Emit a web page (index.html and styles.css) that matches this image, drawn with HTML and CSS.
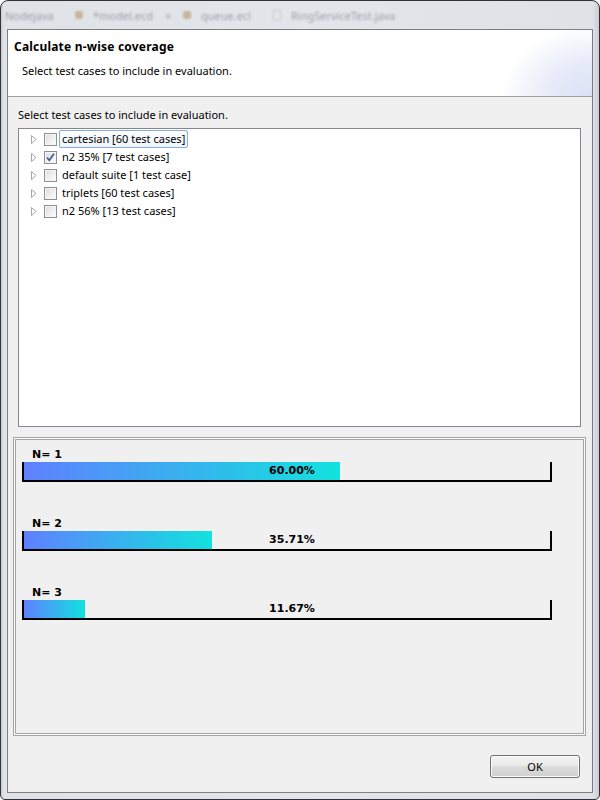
FILE: index.html
```html
<!DOCTYPE html>
<html>
<head>
<meta charset="utf-8">
<link rel="stylesheet" href="styles.css">
</head>
<body>
<div class="window">
  <div class="chrome">
    <span class="tab t1">Nodejava</span>
    <span class="tab t2"><i class="ico ico-o"></i>*model.ecd<span class="x">×</span></span>
    <span class="tab t3"><i class="ico ico-o"></i>queue.ecl</span>
    <span class="tab t4"><i class="ico ico-f"></i>RingServiceTest.java</span>
  </div>
  <div class="client">
    <div class="header">
      <div class="title">Calculate n-wise coverage</div>
      <div class="subtitle">Select test cases to include in evaluation.</div>
    </div>
    <div class="body">
      <div class="label">Select test cases to include in evaluation.</div>
      <div class="tree">
        <div class="row">
          <svg class="arrow" width="6" height="9" viewBox="0 0 6 9"><path d="M0.5 0.5 L5 4.5 L0.5 8.5 Z" fill="none" stroke="#a6a6a6"/></svg>
          <span class="cb"></span>
          <span class="txt focus">cartesian [60 test cases]</span>
        </div>
        <div class="row">
          <svg class="arrow" width="6" height="9" viewBox="0 0 6 9"><path d="M0.5 0.5 L5 4.5 L0.5 8.5 Z" fill="none" stroke="#a6a6a6"/></svg>
          <span class="cb"><svg width="11" height="11" viewBox="0 0 11 11"><path d="M2 5.5 L4.3 8.3 L9 1.8" fill="none" stroke="#4a5e91" stroke-width="1.8"/></svg></span>
          <span class="txt">n2 35% [7 test cases]</span>
        </div>
        <div class="row">
          <svg class="arrow" width="6" height="9" viewBox="0 0 6 9"><path d="M0.5 0.5 L5 4.5 L0.5 8.5 Z" fill="none" stroke="#a6a6a6"/></svg>
          <span class="cb"></span>
          <span class="txt">default suite [1 test case]</span>
        </div>
        <div class="row">
          <svg class="arrow" width="6" height="9" viewBox="0 0 6 9"><path d="M0.5 0.5 L5 4.5 L0.5 8.5 Z" fill="none" stroke="#a6a6a6"/></svg>
          <span class="cb"></span>
          <span class="txt">triplets [60 test cases]</span>
        </div>
        <div class="row">
          <svg class="arrow" width="6" height="9" viewBox="0 0 6 9"><path d="M0.5 0.5 L5 4.5 L0.5 8.5 Z" fill="none" stroke="#a6a6a6"/></svg>
          <span class="cb"></span>
          <span class="txt">n2 56% [13 test cases]</span>
        </div>
      </div>
      <div class="group">
        <div class="group-inner">
          <div class="cov">
            <div class="nlabel">N= 1</div>
            <div class="bar"><div class="fill" style="width:60%"></div><span class="pct">60.00%</span></div>
          </div>
          <div class="cov">
            <div class="nlabel">N= 2</div>
            <div class="bar"><div class="fill" style="width:35.71%"></div><span class="pct">35.71%</span></div>
          </div>
          <div class="cov">
            <div class="nlabel">N= 3</div>
            <div class="bar"><div class="fill" style="width:11.67%"></div><span class="pct">11.67%</span></div>
          </div>
        </div>
      </div>
      <div class="buttons">
        <button class="btn">OK</button>
      </div>
    </div>
  </div>
</div>
</body>
</html>
```
FILE: styles.css
```css
html, body {
  margin: 0;
  padding: 0;
  background: #ffffff;
}
.window {
  width: 600px;
  height: 800px;
  box-sizing: border-box;
  border: 1px solid #2f3236;
  border-radius: 8px 8px 5px 5px;
  background: linear-gradient(90deg, #c9ced4 0px, #dfe3e8 3px, #e2e6eb 50%, #dfe3e8 99%, #c9ced4 100%);
  padding: 0 6px 6px 6px;
  display: flex;
  flex-direction: column;
  font-family: "Noto Sans", "Open Sans", sans-serif;
  font-size: 11px;
  color: #000;
}
.chrome {
  height: 28px;
  display: flex;
  align-items: center;
  position: relative;
  filter: blur(1.3px);
  opacity: 0.5;
  color: #555a62;
  font-size: 11px;
}
.tab {
  display: flex;
  align-items: center;
  white-space: nowrap;
}
.t1 { margin-left: -2px; width: 70px; }
.t2 { width: 108px; }
.t3 { width: 90px; }
.ico {
  display: inline-block;
  width: 8px;
  height: 8px;
  margin-right: 10px;
}
.ico-o { background: #b3874e; border-radius: 2px; }
.ico-f { background: #e6e6e6; border: 1px solid #b0b0b0; width: 6px; height: 9px; }
.x { margin-left: 12px; }
.client {
  flex: 1;
  border: 1px solid #7b8087;
  display: flex;
  flex-direction: column;
  background: #f0f0f0;
}
.header {
  border-bottom: 1px solid #a0a0a0;
  background: radial-gradient(ellipse 90px 70px at 100% 100%, #dbe2f6 0%, #e6eaf8 45%, rgba(255,255,255,0) 100%), #ffffff;
  box-sizing: border-box;
  height: 67px;
}
.title {
  font-weight: bold;
  font-size: 12px;
  letter-spacing: 0.2px;
  padding: 9px 0 0 6px;
  line-height: 16px;
}
.subtitle {
  padding: 8px 0 0 14px;
  line-height: 16px;
}
.body {
  flex: 1;
  display: flex;
  flex-direction: column;
}
.label {
  padding: 10px 0 0 10px;
  line-height: 16px;
  height: 21px;
}
.tree {
  margin: 0 11px 0 10px;
  height: 299px;
  box-sizing: border-box;
  border: 1px solid #828790;
  background: #fff;
  padding-top: 1px;
}
.row {
  height: 18px;
  display: flex;
  align-items: center;
}
.arrow {
  margin-left: 12px;
  margin-right: 7px;
}
.cb {
  width: 11px;
  height: 11px;
  border: 1px solid #8e8f8f;
  background: linear-gradient(135deg, #dcdcdc 0%, #f4f4f4 70%, #ffffff 100%);
  box-shadow: inset 0 0 0 1px #f6f6f6;
  display: flex;
  align-items: center;
  justify-content: center;
  margin-right: 2px;
}
.txt {
  padding: 0 2px;
  line-height: 16px;
  border: 1px solid transparent;
}
.focus {
  border-color: #84acdd;
  border-radius: 2px;
  background: linear-gradient(#fbfdff, #eef5fd);
}
.group {
  margin: 10px 6px 0 5px;
  height: 299px;
  box-sizing: border-box;
  border: 1px solid #a5a5a5;
  padding: 1px;
  background: #fbfbfb;
}
.group-inner {
  height: 100%;
  box-sizing: border-box;
  border: 1px solid #a5a5a5;
  background: #f0f0f0;
  padding: 8px 0 0 6px;
  display: flex;
  flex-direction: column;
  gap: 35px;
}
.cov {
  display: flex;
  flex-direction: column;
}
.nlabel {
  font-family: "DejaVu Sans", sans-serif;
  font-weight: bold;
  font-size: 11px;
  line-height: 14px;
  padding-left: 10px;
}
.bar {
  width: 530px;
  height: 20px;
  box-sizing: border-box;
  border-left: 2px solid #000;
  border-right: 2px solid #000;
  border-bottom: 2px solid #000;
  position: relative;
}
.fill {
  height: 18px;
  background: linear-gradient(90deg, #5f80ff, #12e2de);
}
.pct {
  position: absolute;
  left: 10px;
  right: 0;
  top: 1px;
  text-align: center;
  font-family: "DejaVu Sans", sans-serif;
  font-weight: bold;
  font-size: 11px;
  line-height: 16px;
}
.buttons {
  display: flex;
  justify-content: flex-end;
  padding: 19px 12px 0 0;
}
.btn {
  width: 90px;
  height: 23px;
  border: 1px solid #707070;
  border-radius: 3px;
  background: linear-gradient(#f2f2f2 0%, #ebebeb 45%, #dddddd 50%, #cfcfcf 100%);
  box-shadow: inset 0 0 0 1px #fcfcfc;
  font-family: "Noto Sans", "Open Sans", sans-serif;
  font-size: 11px;
  color: #000;
  padding: 0;
}
```
